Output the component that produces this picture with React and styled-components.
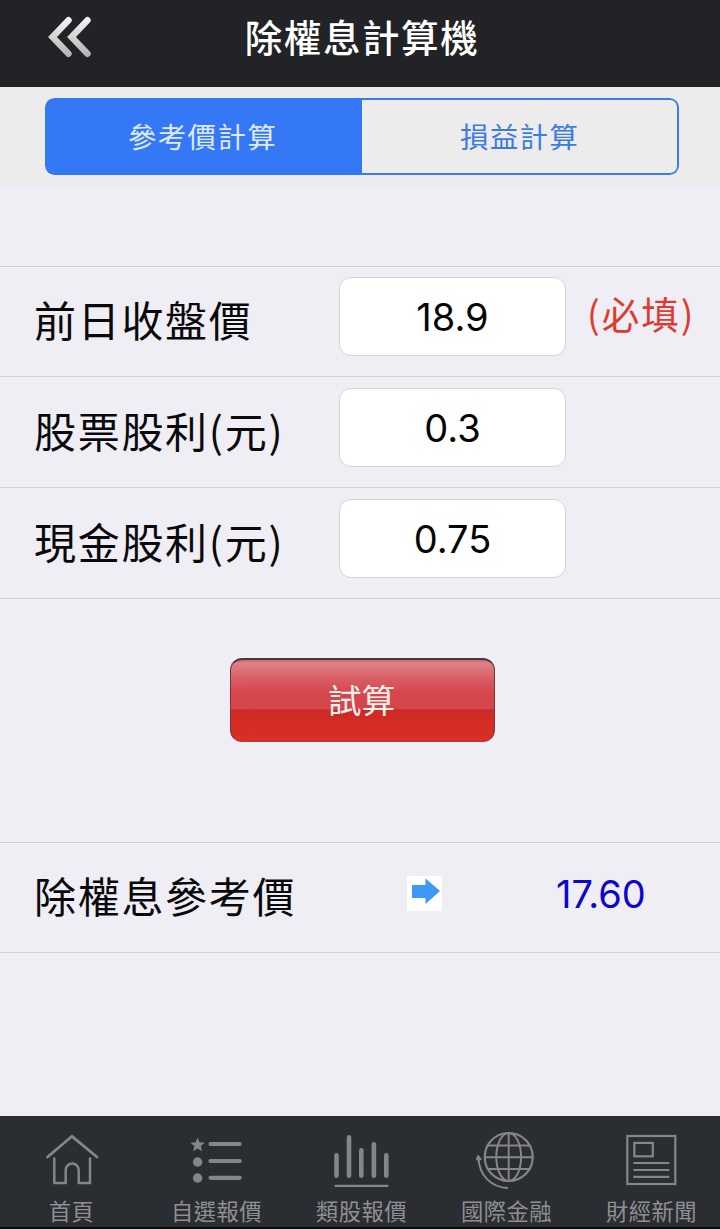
import React, { useState } from 'react'
import styled, { createGlobalStyle } from 'styled-components'

const GlobalStyle = createGlobalStyle`
  * {
    box-sizing: border-box;
  }
  body {
    margin: 0;
    background: #efeef5;
    font-family: "Noto Sans CJK TC", sans-serif;
  }
  button, input {
    font-family: inherit;
    margin: 0;
    padding: 0;
  }
`

const Page = styled.div`
  display: flex;
  flex-direction: column;
  width: 720px;
  height: 1229px;
  overflow: hidden;
  background: #efeef5;
`

const Header = styled.header`
  display: grid;
  grid-template-columns: 140px 1fr 136px;
  align-items: center;
  height: 87px;
  flex: none;
  padding-bottom: 13px;
  background: #222326;
`

const BackButton = styled.button`
  width: 48px;
  height: 46px;
  margin-left: 46px;
  border: 0;
  background: none;

  svg {
    display: block;
  }
`

const Title = styled.h1`
  margin: 0;
  color: #fff;
  font-size: 37.5px;
  font-weight: 500;
  line-height: 50px;
  letter-spacing: 1.6px;
  text-align: center;
  padding-bottom: 3px;
`

const TabBar = styled.div`
  height: 99px;
  flex: none;
  padding: 11px 41px 0 45px;
  background: #ececec;
`

const Tabs = styled.div`
  display: grid;
  grid-template-columns: 1fr 1fr;
  height: 77px;
  border-radius: 9px;
  overflow: hidden;
`

const Tab = styled.button`
  border: 2px solid ${props => (props.$active ? '#3478f6' : '#3b7de0')};
  border-radius: ${props => (props.$last ? '0 9px 9px 0' : '9px 0 0 9px')};
  ${props => props.$last && 'border-left: 0;'}
  background: ${props => (props.$active ? '#3478f6' : 'transparent')};
  color: ${props => (props.$active ? '#dfeafc' : '#3c7ce0')};
  font-size: 28.5px;
  font-weight: 400;
  line-height: 40px;
  letter-spacing: 1.3px;
  padding: 0 ${props => (props.$last ? 0 : 2)}px 2px 0;
`

const Form = styled.div`
  margin-top: 80px;
  border-bottom: 1px solid #cfced5;
`

const Row = styled.div`
  display: grid;
  grid-template-columns: 305px 226px 1fr;
  align-items: start;
  height: 111px;
  padding: 11px 0 0 34px;
  border-top: 1px solid #d2d1d8;

  &:first-child {
    height: 110px;
    padding-top: 10px;
  }
`

const Label = styled.label`
  color: #0a0a0c;
  font-size: 42px;
  font-weight: 400;
  line-height: 60px;
  letter-spacing: 1.7px;
  white-space: nowrap;
  padding-top: 12px;
`

const Field = styled.input`
  width: 227px;
  height: 79px;
  border: 1px solid #d3d3d8;
  border-radius: 12px;
  background: #fff;
  color: #050505;
  font-family: Inter, sans-serif;
  font-size: 38px;
  text-align: center;
  outline: none;
`

const Required = styled.span`
  color: #e03a2f;
  font-size: 37.5px;
  line-height: 54px;
  letter-spacing: 2px;
  white-space: nowrap;
  padding: 9px 0 0 22px;
`

const SubmitButton = styled.button`
  width: 265px;
  height: 84px;
  flex: none;
  margin: 59px 0 0 230px;
  border: 1px solid #71383d;
  border-top: 2px solid #4e3539;
  border-bottom-color: #a83a38;
  border-radius: 12px;
  background: linear-gradient(#c46a71 0%, #e08086 4%, #d95d64 24%, #d5474d 40%, #d4464c 60.5%, #cd2924 61.5%, #d93026 100%);
  color: #fff0f0;
  font-size: 33.5px;
  line-height: 50px;
  padding: 0 2px 3px 0;
`

const Result = styled.div`
  display: grid;
  grid-template-columns: 373px 35px 1fr;
  height: 111px;
  flex: none;
  margin-top: 100px;
  padding-left: 34px;
  border-top: 1px solid #d2d1d8;
  border-bottom: 1px solid #d2d1d8;
`

const ResultLabel = styled(Label)`
  padding-top: 22px;
`

const ArrowBox = styled.span`
  width: 35px;
  height: 35px;
  margin-top: 33px;
  background: #fff;

  svg {
    display: block;
  }
`

const ResultValue = styled.output`
  padding: 26px 0 0 114px;
  color: #0d05d0;
  font-family: Inter, sans-serif;
  font-size: 38px;
  line-height: 50px;
`

const Footer = styled.nav`
  display: grid;
  grid-template-columns: repeat(5, 145px);
  height: 113px;
  flex: none;
  margin: auto -4px 0 -1px;
  border-bottom: 2px solid #08080a;
  background: #2a2d32;
`

const NavItem = styled.button`
  display: flex;
  flex-direction: column;
  align-items: center;
  padding-top: 14px;
  border: 0;
  background: none;
  color: #8f9092;
  font-size: 22.3px;
  line-height: 32px;
  letter-spacing: 0.4px;

  svg {
    display: block;
    flex: none;
    margin: 0 1px 4px 0;
  }
`

const Icon = ({ children }) => (
  <svg width="60" height="60" viewBox="0 0 60 60" fill="none" stroke="#858688" strokeWidth="2" strokeLinecap="round" strokeLinejoin="round">
    {children}
  </svg>
)

const HomeIcon = () => (
  <Icon>
    <path d="M6.5 27L31 6.3 56 27" strokeWidth="2.8" />
    <path d="M13.3 28.5V53h11.4V40a6.5 6.5 0 0 1 13 0v13H49V28.5" strokeWidth="2.5" />
  </Icon>
)

const ListIcon = () => (
  <Icon>
    <path d="M11.6 7.5l2 4.8 5.2.4-4 3.4 1.3 5.1-4.5-2.8-4.5 2.8 1.3-5.1-4-3.4 5.2-.4z" fill="#858688" stroke="none" />
    <circle cx="11.6" cy="32" r="4.7" fill="#858688" stroke="none" />
    <circle cx="11.6" cy="48" r="4.7" fill="#858688" stroke="none" />
    <path d="M24.5 14H53.7M24.5 31H53.7M24.5 47.8H53.7" strokeWidth="4.2" />
  </Icon>
)

const ChartIcon = () => (
  <Icon>
    <path d="M5.5 25.3v20.4M18 7.3v38.4M30.3 20.3v25.4M42.9 14.3v31.4M55.3 25.3v20.4" strokeWidth="4.6" />
    <path d="M4.5 55.8h52" strokeWidth="2.2" />
  </Icon>
)

const GlobeIcon = () => (
  <Icon>
    <circle cx="32.7" cy="27" r="24" strokeWidth="2.2" />
    <ellipse cx="32.7" cy="27" rx="12.4" ry="24" />
    <path d="M32.7 3v48M9 27.3h47.4M11.5 15.5h42.4M11.5 39h42.4" strokeWidth="1.9" />
    <path d="M32 58C15.5 57.5 3 45.5 2.5 28" strokeLinecap="butt" />
    <path d="M0 29.5L2.2 25l3 4.3z" fill="#858688" strokeWidth="1" />
  </Icon>
)

const NewsIcon = () => (
  <Icon>
    <g strokeLinecap="butt" strokeLinejoin="miter" strokeWidth="2.2">
      <rect x="6.3" y="6" width="48" height="48" />
      <rect x="13.3" y="12.9" width="18.5" height="13.4" />
      <path d="M12.3 33h36M12.3 40h36M12.3 46.8h36" />
    </g>
  </Icon>
)

const navItems = [
  { name: '首頁', icon: HomeIcon },
  { name: '自選報價', icon: ListIcon },
  { name: '類股報價', icon: ChartIcon },
  { name: '國際金融', icon: GlobeIcon },
  { name: '財經新聞', icon: NewsIcon },
]

const fields = [
  { id: 'close', label: '前日收盤價', value: '18.9', required: true },
  { id: 'stock', label: '股票股利(元)', value: '0.3' },
  { id: 'cash', label: '現金股利(元)', value: '0.75' },
]

function App() {
  const [tab, setTab] = useState(0)

  return (
    <Page>
      <GlobalStyle />
      <Header>
        <BackButton>
          <svg width="48" height="46" viewBox="0 0 48 46" fill="none" stroke="url(#chevron)" strokeWidth="6.4" strokeLinecap="round">
            <defs>
              <linearGradient id="chevron" x1="0" y1="4" x2="0" y2="42" gradientUnits="userSpaceOnUse">
                <stop offset="0" stopColor="#f4f4f4" />
                <stop offset="1" stopColor="#b4b4b4" />
              </linearGradient>
            </defs>
            <path d="M22.5 6.2L6.5 23 22.5 39.8M41.5 6.2L25.5 23 41.5 39.8" />
          </svg>
        </BackButton>
        <Title>除權息計算機</Title>
      </Header>

      <TabBar>
        <Tabs>
          {['參考價計算', '損益計算'].map((name, i) => (
            <Tab key={name} $active={tab === i} $last={i === 1} onClick={() => setTab(i)}>{name}</Tab>
          ))}
        </Tabs>
      </TabBar>

      <Form>
        {fields.map(field => (
          <Row key={field.id}>
            <Label htmlFor={field.id}>{field.label}</Label>
            <Field id={field.id} defaultValue={field.value} />
            {field.required && <Required>(必填)</Required>}
          </Row>
        ))}
      </Form>

      <SubmitButton>試算</SubmitButton>

      <Result>
        <ResultLabel as="span">除權息參考價</ResultLabel>
        <ArrowBox>
          <svg width="35" height="35" viewBox="0 0 35 35">
            <path d="M5 9h13.5V2.5L33 15 18.5 28v-6H5z" fill="#3d98f8" />
          </svg>
        </ArrowBox>
        <ResultValue>17.60</ResultValue>
      </Result>

      <Footer>
        {navItems.map(({ name, icon: ItemIcon }) => (
          <NavItem key={name}>
            <ItemIcon />
            {name}
          </NavItem>
        ))}
      </Footer>
    </Page>
  )
}

export default App
